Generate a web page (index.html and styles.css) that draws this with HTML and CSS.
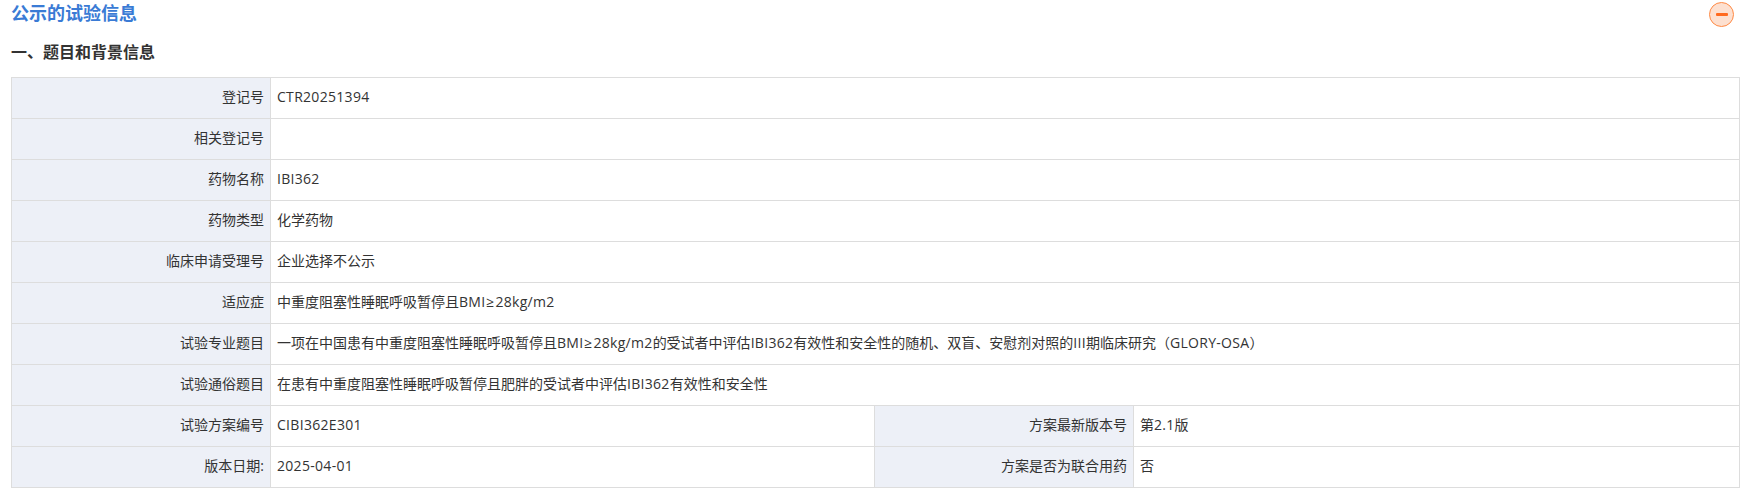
FILE: index.html
```html
<!DOCTYPE html>
<html lang="zh-CN">
<head>
<meta charset="utf-8">
<title>公示的试验信息</title>
<link rel="stylesheet" href="styles.css">
</head>
<body>
<div class="head">
  <h2 class="title">公示的试验信息</h2>
  <span class="toggle"><span class="bar"></span></span>
</div>
<h3 class="sub">一、题目和背景信息</h3>
<table class="info">
  <colgroup><col class="c1"><col class="c2"><col class="c3"><col class="c4"></colgroup>
  <tr><th>登记号</th><td colspan="3"><span class="lat">CTR20251394</span></td></tr>
  <tr><th>相关登记号</th><td colspan="3"></td></tr>
  <tr><th>药物名称</th><td colspan="3"><span class="lat">IBI362</span></td></tr>
  <tr><th>药物类型</th><td colspan="3">化学药物</td></tr>
  <tr><th>临床申请受理号</th><td colspan="3">企业选择不公示</td></tr>
  <tr><th>适应症</th><td colspan="3">中重度阻塞性睡眠呼吸暂停且<span class="lat">BMI<span class="sym">≥</span>28kg/m2</span></td></tr>
  <tr><th>试验专业题目</th><td colspan="3">一项在中国患有中重度阻塞性睡眠呼吸暂停且<span class="lat">BMI<span class="sym">≥</span>28kg/m2</span>的受试者中评估<span class="lat">IBI362</span>有效性和安全性的随机、双盲、安慰剂对照的<span class="lat">III</span>期临床研究（<span class="lat">GLORY-OSA</span>）</td></tr>
  <tr><th>试验通俗题目</th><td colspan="3">在患有中重度阻塞性睡眠呼吸暂停且肥胖的受试者中评估<span class="lat">IBI362</span>有效性和安全性</td></tr>
  <tr><th>试验方案编号</th><td><span class="lat">CIBI362E301</span></td><th>方案最新版本号</th><td>第<span class="lat">2.1</span>版</td></tr>
  <tr><th>版本日期:</th><td><span class="lat">2025-04-01</span></td><th>方案是否为联合用药</th><td>否</td></tr>
</table>
</body>
</html>
```

FILE: styles.css
```css
* { box-sizing: border-box; }
html, body { margin: 0; padding: 0; }
body {
  background: #fff;
  color: #333;
  font-family: "Open Sans", "Noto Sans CJK SC", sans-serif;
  font-size: 14px;
}
.head {
  display: flex;
  justify-content: space-between;
  align-items: center;
  height: 28px;
  padding: 0 15px 0 11px;
}
.title {
  margin: 0 0 2px;
  font-size: 18px;
  font-weight: 700;
  line-height: 26px;
  color: #3a7bd5;
}
.toggle {
  display: flex;
  align-items: center;
  justify-content: center;
  width: 25px;
  height: 25px;
  border: 1px solid #ff8a45;
  border-radius: 50%;
  background: #fde0d0;
}
.bar {
  width: 12px;
  height: 3px;
  border-radius: 1px;
  background: #ff6a1f;
}
.sub {
  margin: 11px 0 0;
  padding-left: 11px;
  font-size: 16px;
  font-weight: 700;
  line-height: 26px;
  color: #333;
}
.info {
  width: 1728px;
  margin: 12px 0 0 11px;
  border-collapse: collapse;
  table-layout: fixed;
}
.c1, .c3 { width: 259px; }
.c2 { width: 604px; }
.c4 { width: 606px; }
.info th, .info td {
  height: 41px;
  padding: 0 6px 2px;
  border: 1px solid #ddd;
  font-weight: 400;
  vertical-align: middle;
  line-height: 20px;
}
.info th {
  background: #edf0f7;
  text-align: right;
}
.info td { text-align: left; }
.lat { letter-spacing: 0.3px; }
.sym {
  display: inline-block;
  width: 10px;
  text-align: center;
}
```
